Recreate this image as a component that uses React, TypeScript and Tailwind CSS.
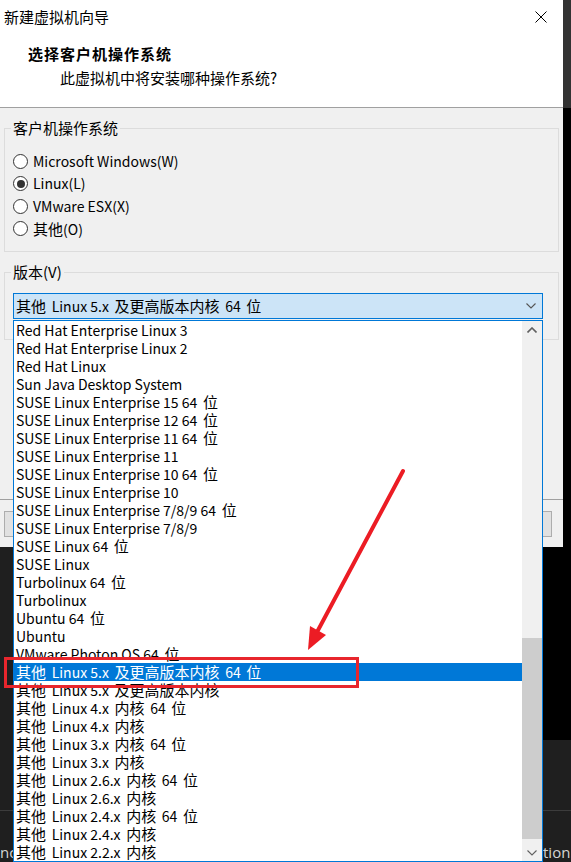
import React from "react";

const font = "font-['Noto_Sans_CJK_SC','Noto_Sans',sans-serif]";

const versions = [
  "Red Hat Enterprise Linux 3",
  "Red Hat Enterprise Linux 2",
  "Red Hat Linux",
  "Sun Java Desktop System",
  "SUSE Linux Enterprise 15 64 位",
  "SUSE Linux Enterprise 12 64 位",
  "SUSE Linux Enterprise 11 64 位",
  "SUSE Linux Enterprise 11",
  "SUSE Linux Enterprise 10 64 位",
  "SUSE Linux Enterprise 10",
  "SUSE Linux Enterprise 7/8/9 64 位",
  "SUSE Linux Enterprise 7/8/9",
  "SUSE Linux 64 位",
  "SUSE Linux",
  "Turbolinux 64 位",
  "Turbolinux",
  "Ubuntu 64 位",
  "Ubuntu",
  "VMware Photon OS 64 位",
  "其他 Linux 5.x 及更高版本内核 64 位",
  "其他 Linux 5.x 及更高版本内核",
  "其他 Linux 4.x 内核 64 位",
  "其他 Linux 4.x 内核",
  "其他 Linux 3.x 内核 64 位",
  "其他 Linux 3.x 内核",
  "其他 Linux 2.6.x 内核 64 位",
  "其他 Linux 2.6.x 内核",
  "其他 Linux 2.4.x 内核 64 位",
  "其他 Linux 2.4.x 内核",
  "其他 Linux 2.2.x 内核",
];

const selected = "其他 Linux 5.x 及更高版本内核 64 位";

const osOptions = [
  { label: "Microsoft Windows(W)", checked: false },
  { label: "Linux(L)", checked: true },
  { label: "VMware ESX(X)", checked: false },
  { label: "其他(O)", checked: false },
];

// Windows' YaHei sets Han glyphs a bit wider than the latin run, with roomier spaces around them
function Mixed({ text }: { text: string }) {
  const parts = text.split(/([\u4e00-\u9fff]+)/).filter(Boolean);
  return (
    <>
      {parts.map((p, i) => {
        if (!/[\u4e00-\u9fff]/.test(p)) return <span key={i}>{p}</span>;
        const before = i > 0 && parts[i - 1].endsWith(" ");
        const after = i < parts.length - 1 && parts[i + 1].startsWith(" ");
        return (
          <span key={i} className={`text-[15px] ${before ? "pl-[2.5px]" : ""} ${after ? "pr-[2.5px]" : ""}`}>
            {p}
          </span>
        );
      })}
    </>
  );
}

function Radio({ checked }: { checked: boolean }) {
  return (
    <span className="w-[15px] h-[15px] rounded-full border border-[#333333] bg-white flex items-center justify-center shrink-0">
      {checked && <span className="w-[8px] h-[8px] rounded-full bg-[#333333]" />}
    </span>
  );
}

function Chevron({ up, color }: { up?: boolean; color: string }) {
  return (
    <svg width="10" height="6" viewBox="0 0 10 6">
      <path
        d={up ? "M0.5 5.5 L5 1 L9.5 5.5" : "M0.5 0.5 L5 5 L9.5 0.5"}
        fill="none"
        stroke={color}
        strokeWidth={up ? 1.6 : 1.1}
      />
    </svg>
  );
}

export default function App() {
  return (
    <div className={`relative w-[571px] h-[862px] overflow-hidden bg-black text-black ${font}`}>
      {/* dialog + right edge */}
      <div className="flex h-[547px]">
        <div className="w-[563px] flex flex-col">
          {/* header */}
          <div className="h-[108px] bg-white border-b border-[#a0a0a0]">
            <div className="h-[34px] flex items-center justify-between pl-[4px] pr-[16px] text-[15px]">
              <span>新建虚拟机向导</span>
              <svg width="12" height="12" viewBox="0 0 12 12">
                <path d="M0.5 0.5 L11.5 11.5 M11.5 0.5 L0.5 11.5" stroke="#000" strokeWidth="1" />
              </svg>
            </div>
            <div className="mt-[10px] pl-[28px] text-[15px] leading-[20px] font-bold tracking-[1px]">
              选择客户机操作系统
            </div>
            <div className="mt-[4px] pl-[60px] text-[15px] leading-[20px]">
              此虚拟机中将安装哪种操作系统?
            </div>
          </div>

          {/* body */}
          <div className="flex-1 bg-[#f0f0f0] flex flex-col">
            <fieldset className="mt-[11px] mx-[4px] border border-[#dcdcdc] px-[6px] pb-[11px]">
              <legend className="px-[2px] text-[15px] leading-[18px]">客户机操作系统</legend>
              <div className="pt-[13px] flex flex-col">
                {osOptions.map((o) => (
                  <div key={o.label} className="h-[22.5px] flex items-center gap-[5px] ml-[2px] text-[14px]">
                    <Radio checked={o.checked} />
                    <span>
                      <Mixed text={o.label} />
                    </span>
                  </div>
                ))}
              </div>
            </fieldset>

            <fieldset className="mt-[11px] mx-[4px] border border-[#dcdcdc] px-[6px] pb-[20px]">
              <legend className="px-[2px] text-[15px] leading-[18px]">版本(V)</legend>
              <div className="mt-[12px] ml-[2px] w-[530px] h-[26px] bg-[#cce4f7] border border-[#0078d7] flex items-center justify-between pl-[2px] pr-[6px] text-[14px]">
                <span className="whitespace-nowrap">
                  <Mixed text={selected} />
                </span>
                <Chevron color="#555555" />
              </div>
            </fieldset>

            <div className="flex-1" />
            <div className="border-t border-[#a0a0a0] h-[48px] flex items-center justify-between pl-[4px] pr-[11px] pt-[1px]">
              <button className="w-[80px] h-[26px] bg-[#e1e1e1] border border-[#adadad] text-[14px]">帮助</button>
              <div className="flex gap-[8px]">
                <button className="w-[90px] h-[26px] bg-[#e1e1e1] border border-[#adadad] text-[14px]">&lt; 上一步(B)</button>
                <button className="w-[90px] h-[26px] bg-[#e1e1e1] border border-[#adadad] text-[14px]">下一步(N) &gt;</button>
                <button className="w-[80px] h-[26px] bg-[#e1e1e1] border border-[#adadad] text-[14px]">取消</button>
              </div>
            </div>
          </div>
        </div>
        <div className="w-[8px] flex flex-col">
          <div className="h-[108px] bg-[#333333]" />
          <div className="flex-1 bg-black" />
        </div>
      </div>

      {/* background app below the dialog */}
      <div className="flex h-[193px]">
        <div className="w-[13px] bg-[#1f1f1f]" />
        <div className="flex-1 bg-black" />
      </div>
      <div className="h-[70px] bg-[#1f1f1f]" />
      <div className="h-[52px] bg-[#1f1f1f] border-t border-[#3c3c3c] flex items-end justify-between text-[15px] leading-[18px] text-[#d4d4d4] pb-[1px] font-['Open_Sans',sans-serif]">
        <span className="w-[13px] overflow-hidden whitespace-nowrap">nc</span>
        <span className="w-[28px] overflow-hidden whitespace-nowrap">tion.</span>
      </div>

      {/* open dropdown list */}
      <div className="absolute left-[13px] top-[320px] w-[530px] h-[542px] border border-[#0078d7] bg-white flex">
        <div className="flex-1 flex flex-col">
          {versions.map((v) => (
            <div
              key={v}
              className={`h-[18px] leading-[18px] pl-[2px] text-[14px] whitespace-nowrap ${
                v === selected ? "bg-[#0078d7] text-white" : ""
              }`}
            >
              <Mixed text={v} />
            </div>
          ))}
        </div>
        <div className="w-[20px] bg-[#f0f0f0] flex flex-col">
          <div className="h-[17px] flex items-center justify-center">
            <Chevron up color="#606060" />
          </div>
          <div className="flex-1 flex flex-col">
            <div className="h-[300px]" />
            <div className="h-[201px] bg-[#cdcdcd]" />
          </div>
          <div className="h-[17px] flex items-center justify-center">
            <Chevron color="#606060" />
          </div>
        </div>
      </div>

      {/* red annotation */}
      <svg className="absolute left-0 top-0 pointer-events-none" width="571" height="862">
        <line x1="403" y1="471" x2="316" y2="634" stroke="#ec1c24" strokeWidth="4" strokeLinecap="round" />
        <polygon points="308,650 310,626 326,635" fill="#ec1c24" />
        <rect x="5.5" y="658.5" width="352" height="28" fill="none" stroke="#e8262d" strokeWidth="3" />
      </svg>
    </div>
  );
}
